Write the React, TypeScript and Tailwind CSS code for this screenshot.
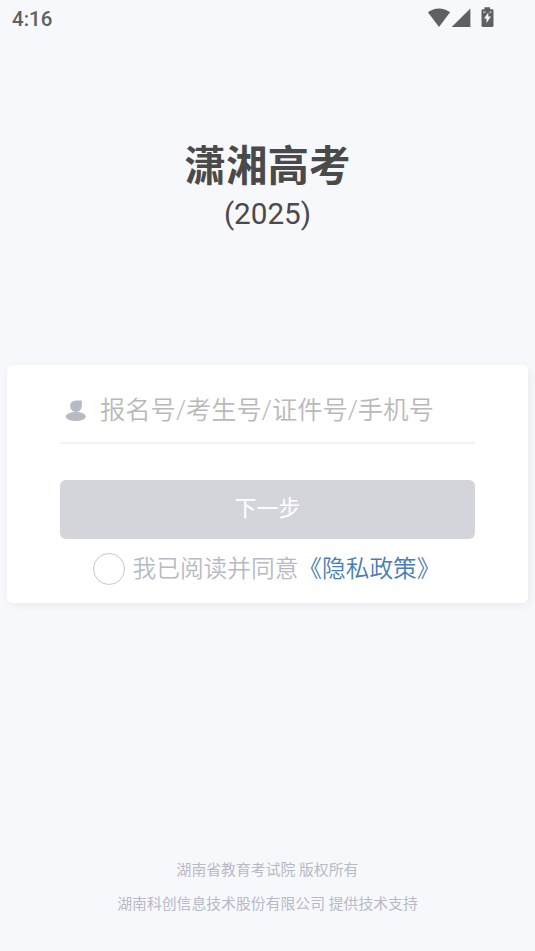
import { useState } from "react"

const footerLines = [
  "湖南省教育考试院 版权所有",
  "湖南科创信息技术股份有限公司 提供技术支持",
]

function StatusBar() {
  return (
    <div className="flex h-[38px] items-center justify-between pl-3 pr-[41px] text-[#5f6062]">
      <span className="text-[20.5px] font-medium leading-none">4:16</span>
      <div className="flex items-center">
        {/* Wifi */}
        <svg width="24" height="20" viewBox="0 0 24 20" className="-mt-1" fill="currentColor">
          <path d="M.9 5.300C7.300.2 16.700.2 23.100 5.300L12 19.900z" />
        </svg>
        {/* Signal */}
        <svg width="20" height="20" viewBox="0 0 20 20" className="-mt-1" fill="currentColor">
          <path d="M19.400 1.500v18.400H.7z" />
        </svg>
        {/* Battery */}
        <svg width="13" height="20" viewBox="0 0 13 20" className="ml-[10px] -mt-1" fill="currentColor">
          <path
            fillRule="evenodd"
            d="M3.500.3h5.600v2h1.900q1.500 0 1.500 1.400v14.700q0 1.500-1.500 1.500H2q-1.500 0-1.500-1.500V3.700q0-1.400 1.500-1.400h1.500zM7.300 5.500L3 11.600h2.500v4.300l4.500-6.300H7.300z"
          />
          <path d="M2.200 4.500h2.600v1.300H2.200zM8.500 4.500h2.200v1.300H8.500z" fill="#c9cacd" />
        </svg>
      </div>
    </div>
  )
}

export default function App() {
  const [account, setAccount] = useState("")
  const [agreed, setAgreed] = useState(false)

  return (
    <div className="flex h-[951px] w-[535px] flex-col overflow-hidden bg-[#f7f8fc] font-['Roboto','Noto_Sans_CJK_SC',sans-serif]">
      <StatusBar />

      {/* Title */}
      <header className="mt-[100px] flex h-[227px] flex-col items-center text-[#4a4a4a]">
        <h1 className="h-14 text-[41.5px] font-bold leading-[58px]">潇湘高考</h1>
        <p className="h-10 text-[29.7px] leading-10">(2025)</p>
      </header>

      {/* Login card */}
      <main className="mx-[7px] flex h-[238px] flex-col rounded-md bg-white px-[53px] shadow-[2px_2px_8px_rgba(0,0,0,0.06)]">
        <div className="flex h-[79px] shrink-0 items-center border-b-2 border-[#f2f2f3] pt-[15px]">
          <svg width="22" height="22" viewBox="0 0 22 22" className="ml-[5px] shrink-0" fill="#b7bac4">
            <path d="M11 .4h5.800v5.900q0 3.400-2.600 4.900-3.200 1.400-6.400 0-2.600-1.600-2.600-4.900Q5.200.5 11 .4z" />
            <ellipse cx="10.800" cy="16.500" rx="10" ry="4.500" />
          </svg>
          <input
            className="ml-[13px] w-full min-w-0 bg-transparent text-[25.3px] font-[350] leading-9 text-[#4a4a4a] outline-none placeholder:text-[#b9b9b9]"
            placeholder="报名号/考生号/证件号/手机号"
            value={account}
            onChange={(e) => setAccount(e.target.value)}
          />
        </div>

        <button className="mt-9 h-[59px] shrink-0 rounded-md bg-[#d4d5db] pb-[3px] text-[22px] text-white">
          下一步
        </button>

        <div className="mt-[14px] flex h-8 items-center pl-[33px] text-[23.7px] font-[350] text-[#b7bac4]">
          <button
            aria-label="同意"
            onClick={() => setAgreed(!agreed)}
            className={`mr-[7.5px] size-8 shrink-0 rounded-full border-[1.5px] border-[#c8c8c8] ${agreed ? "bg-[#4a7db8]" : "bg-white"}`}
          />
          <span className="whitespace-nowrap leading-8">
            我已阅读并同意<a className="text-[#4a7db8]">《隐私政策》</a>
          </span>
        </div>
      </main>

      {/* Footer */}
      <footer className="mt-auto flex flex-col items-center pb-[30px] text-[14.85px] leading-[34px] text-[#b7bac4]">
        {footerLines.map((line) => (
          <p key={line}>{line}</p>
        ))}
      </footer>
    </div>
  )
}
